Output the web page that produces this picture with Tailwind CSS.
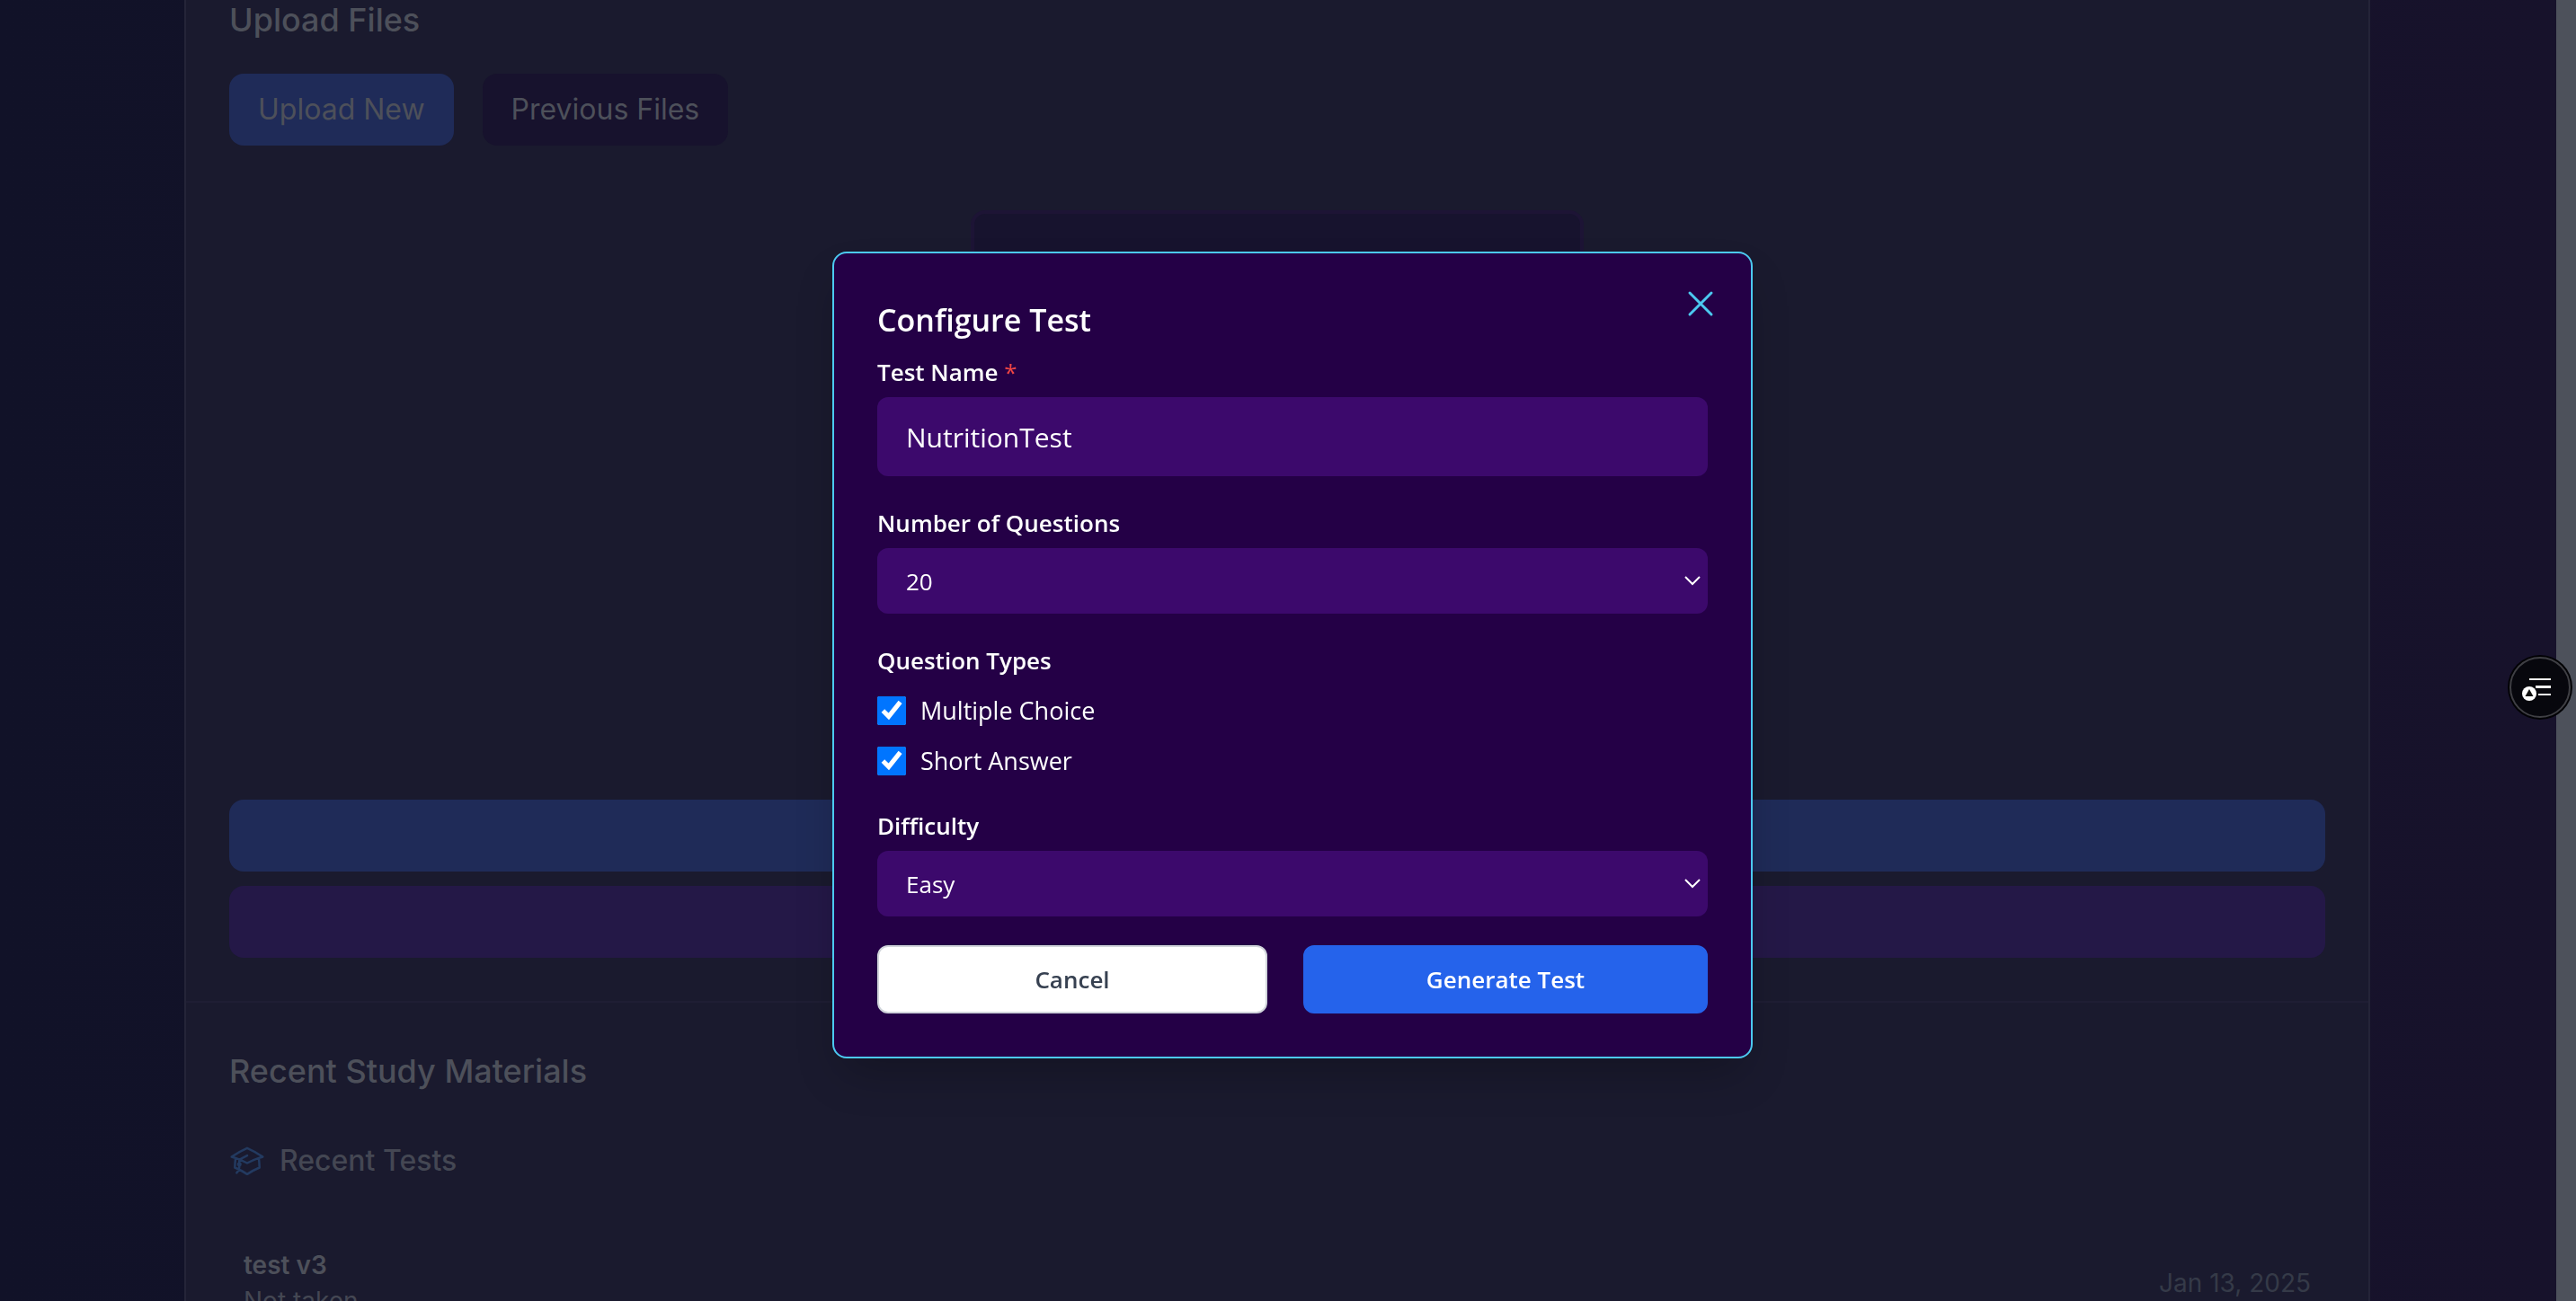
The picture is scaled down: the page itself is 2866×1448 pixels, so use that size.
<!DOCTYPE html>
<html lang="en">
<head>
<meta charset="utf-8">
<title>Study Materials</title>
<script src="https://cdn.jsdelivr.net/npm/@tailwindcss/browser@4"></script>
</head>
<body class="h-screen overflow-hidden bg-[#15122a] font-['Inter',sans-serif] text-[#4d505a]">
<div class="flex h-full">
  <main class="h-full min-w-0 flex-1 overflow-hidden bg-linear-to-r from-[#111228] to-[#17122b] pr-0.5">
    <div class="mx-auto min-h-full max-w-[2432px] border-x-2 border-[#242438] bg-[#1a1a2e]">
      <section class="flex flex-col border-b-2 border-[#1f1e34] px-12 pt-0.5 pb-12">
        <h2 class="text-4xl leading-10 font-medium">Upload Files</h2>
        <div class="mt-10 flex gap-8">
          <button type="button" class="h-20 rounded-2xl bg-[#1f2b58] px-8 text-[32px]">Upload New</button>
          <button type="button" class="h-20 rounded-2xl bg-[#17122d] px-8 text-[32px]">Previous Files</button>
        </div>
        <div class="mx-auto mt-18 h-[600px] w-[682px] rounded-2xl border-4 border-[#1d1435] bg-[#17132e]"></div>
        <div class="mt-14 flex flex-col gap-4">
          <button type="button" aria-label="Generate test" class="h-20 rounded-2xl bg-[#1f2b58]"></button>
          <button type="button" aria-label="Generate flashcards" class="h-20 rounded-2xl bg-[#241847]"></button>
        </div>
      </section>
      <section class="px-12 pt-14">
        <h2 class="text-4xl leading-10 font-medium">Recent Study Materials</h2>
        <h3 class="mt-15 flex items-center gap-4 text-[32px] leading-10 font-medium text-[#444753]">
          <svg class="size-10 text-[#233a60]" viewBox="0 0 24 24" fill="none" stroke="currentColor" stroke-width="1.5" stroke-linecap="round" stroke-linejoin="round"><path d="M4.26 10.147a60.438 60.438 0 0 0-.491 6.347A48.62 48.62 0 0 1 12 20.904a48.62 48.62 0 0 1 8.232-4.41 60.46 60.46 0 0 0-.491-6.347m-15.482 0a50.636 50.636 0 0 0-2.658-.813A59.906 59.906 0 0 1 12 3.493a59.903 59.903 0 0 1 10.399 5.84c-.896.248-1.783.52-2.658.814m-15.482 0A50.717 50.717 0 0 1 12 13.489a50.702 50.702 0 0 1 7.74-3.342M6.75 15a.75.75 0 1 0 0-1.5.75.75 0 0 0 0 1.5Zm0 0v-3.675A55.378 55.378 0 0 1 12 8.443m-7.007 11.55A5.981 5.981 0 0 0 6.75 15.75v-1.5"/></svg>
          Recent Tests
        </h3>
        <div class="mt-19 flex items-center justify-between px-4 text-[28px] leading-10">
          <div>
            <p class="font-semibold">test v3</p>
            <p class="text-[#444753]">Not taken</p>
          </div>
          <time datetime="2025-01-13" class="text-[#353a48]">Jan 13, 2025</time>
        </div>
      </section>
    </div>
  </main>
  <div class="w-[22px] bg-[#4d515b]"></div>
</div>

<!-- Modal -->
<div class="fixed inset-0 flex items-center justify-center pt-2.5 pl-2.5">
  <form role="dialog" aria-labelledby="dialog-title" class="relative w-full max-w-5xl rounded-2xl border-2 border-[#4cc9f0] bg-[#240046] p-12 font-['Open_Sans','Noto_Sans',sans-serif] text-[28px] leading-10 text-white shadow-2xl">
    <button type="button" aria-label="Close" class="absolute top-8 right-8 text-[#4cc9f0]">
      <svg class="size-12" viewBox="0 0 24 24" fill="none" stroke="currentColor" stroke-width="1.5" stroke-linecap="round"><path d="M6 18 18 6M6 6l12 12"/></svg>
    </button>
    <h2 id="dialog-title" class="text-[34px] leading-[52px] font-semibold">Configure Test</h2>
    <div class="mt-3">
      <label for="test-name" class="block text-[26px] font-semibold">Test Name <span class="font-normal text-[#ef4444]">*</span></label>
      <input id="test-name" type="text" value="NutritionTest" class="mt-2 block h-22 w-full rounded-xl bg-[#3c096c] px-8 text-[30px]">
    </div>
    <div class="mt-8">
      <label for="question-count" class="block text-[26px] font-semibold">Number of Questions</label>
      <div class="relative mt-2">
        <select id="question-count" class="block h-[73px] w-full appearance-none rounded-xl bg-[#3c096c] px-8 text-[26px]"><option>20</option></select>
        <svg class="pointer-events-none absolute top-6 right-2 h-6 w-[18px]" viewBox="0 0 18 24" fill="none" stroke="currentColor" stroke-width="2"><path d="m1 8 8 8 8-8"/></svg>
      </div>
    </div>
    <fieldset class="mt-8">
      <legend class="text-[26px] font-semibold">Question Types</legend>
      <div class="mt-4 flex flex-col gap-4">
        <label class="flex items-center gap-4 text-[27px]"><input type="checkbox" checked class="size-8">Multiple Choice</label>
        <label class="flex items-center gap-4 text-[27px]"><input type="checkbox" checked class="size-8">Short Answer</label>
      </div>
    </fieldset>
    <div class="mt-8">
      <label for="difficulty" class="block text-[26px] font-semibold">Difficulty</label>
      <div class="relative mt-2">
        <select id="difficulty" class="block h-[73px] w-full appearance-none rounded-xl bg-[#3c096c] px-8 text-[26px]"><option>Easy</option></select>
        <svg class="pointer-events-none absolute top-6 right-2 h-6 w-[18px]" viewBox="0 0 18 24" fill="none" stroke="currentColor" stroke-width="2"><path d="m1 8 8 8 8-8"/></svg>
      </div>
    </div>
    <div class="mt-8 flex gap-10">
      <button type="button" class="h-19 flex-[430] rounded-xl border-2 border-[#d1d5db] bg-white text-[26px] font-semibold text-[#374151]">Cancel</button>
      <button type="submit" class="h-19 flex-[446] rounded-xl border-2 border-[#2563eb] bg-[#2563eb] text-[26px] font-semibold">Generate Test</button>
    </div>
  </form>
</div>

<!-- Floating assistant button -->
<button type="button" aria-label="Open reading assistant" class="fixed top-[729px] right-1 size-18 rounded-full">
  <svg class="size-18" viewBox="0 0 72 72"><circle cx="36" cy="36" r="36" fill="#020205"/><circle cx="36" cy="36" r="33" fill="#07070d" stroke="#3f3f44" stroke-width="2"/><g fill="#f1f1f1"><path d="M24 26h24v2H24zM31 34h17v3H31zM34 43h14v2H34z"/></g><circle cx="24" cy="43" r="9.500" fill="#07070d"/><circle cx="24" cy="43" r="8" fill="#fff"/><path d="m24 38 4.500 8h-9z" fill="#111"/></svg>
</button>
</body>
</html>
